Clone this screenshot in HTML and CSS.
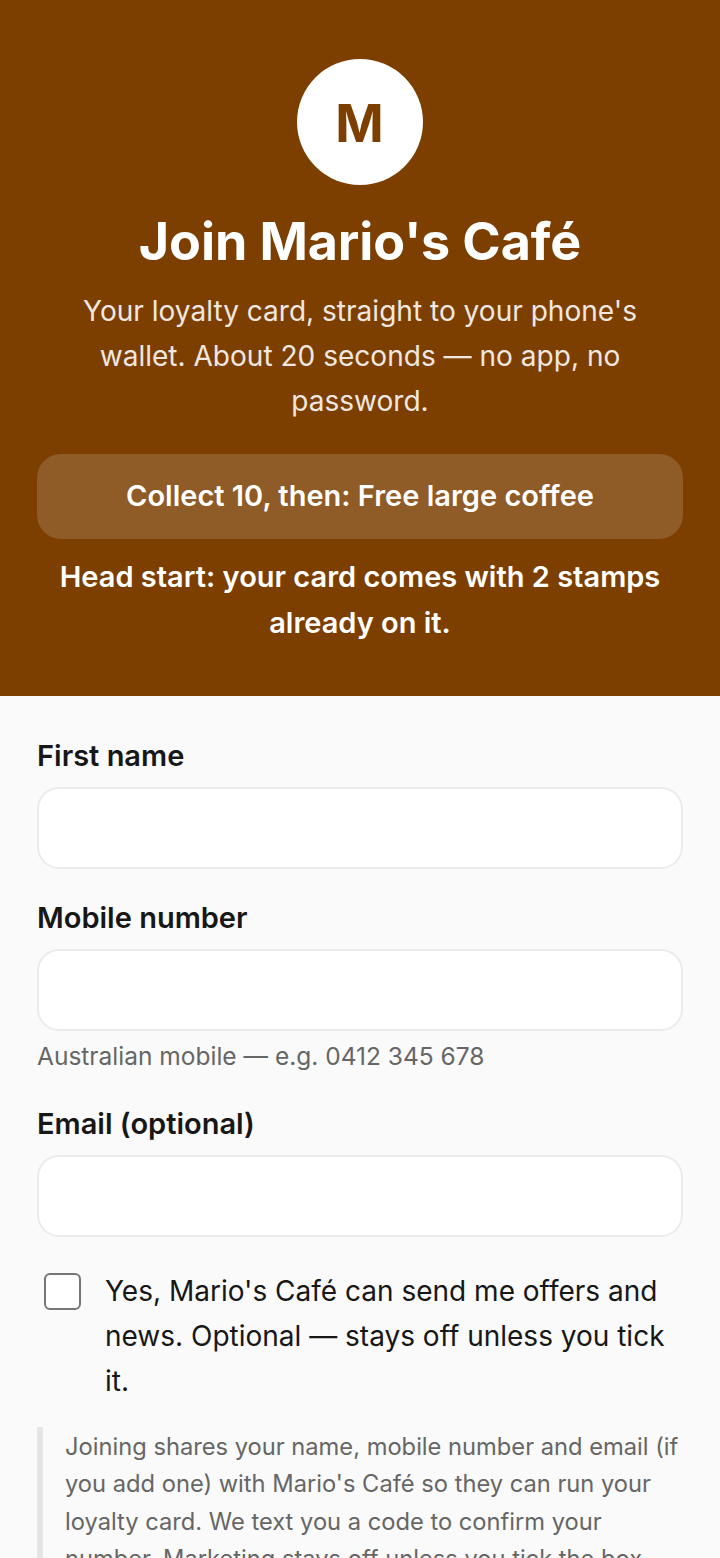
FILE: index.html
```html
<!DOCTYPE html>
<html lang="en">

<head>
  <meta charset="UTF-8" />
  <meta name="viewport" content="width=device-width, initial-scale=1.0" />
  <title>Join Mario's Café</title>
  <link rel="stylesheet" href="styles.css">
</head>

<body>
  <header class="hero">
    <div class="logo">M</div>
    <h1>Join Mario's Café</h1>
    <p class="intro">Your loyalty card, straight to your phone's wallet. About 20 seconds — no app, no password.</p>
    <div class="reward">Collect 10, then: Free large coffee</div>
    <p class="head-start">Head start: your card comes with 2 stamps already on it.</p>
  </header>

  <form class="join-form">
    <div class="field">
      <label for="firstName">First name</label>
      <input id="firstName" type="text">
    </div>
    <div class="field">
      <label for="mobile">Mobile number</label>
      <input id="mobile" type="tel">
      <p class="hint">Australian mobile — e.g. 0412 345 678</p>
    </div>
    <div class="field">
      <label for="email">Email (optional)</label>
      <input id="email" type="email">
    </div>
    <label class="consent">
      <input type="checkbox">
      <span>Yes, Mario's Café can send me offers and news. Optional — stays off unless you tick it.</span>
    </label>
    <p class="notice">Joining shares your name, mobile number and email (if you add one) with Mario's Café so they can run your loyalty card. We text you a code to confirm your number. Marketing stays off unless you tick the box.</p>
  </form>
</body>

</html>
```

FILE: styles.css
```css
* {
  margin: 0;
  padding: 0;
  box-sizing: border-box;
}

html,
body {
  height: 1558px;
  overflow: hidden;
}

body {
  font-family: "Inter", sans-serif;
  background-color: #fafafa;
  color: #171717;
}

.hero {
  background-color: #7c3f00;
  color: #fff;
  text-align: center;
  height: 696px;
  padding: 59px 37px 0;
}

.logo {
  width: 126px;
  height: 126px;
  margin: 0 auto 27px;
  border-radius: 50%;
  background-color: #fff;
  color: #7c3f00;
  font-size: 52px;
  font-weight: 700;
  line-height: 130px;
  text-indent: -1px;
}

h1 {
  font-size: 52px;
  font-weight: 700;
  line-height: 60px;
  letter-spacing: -0.1px;
  margin-bottom: 17px;
}

.intro {
  font-size: 28.05px;
  line-height: 45px;
  color: #fff;
  opacity: 0.88;
  margin-bottom: 30px;
}

.reward {
  height: 85px;
  border-radius: 24px;
  background-color: rgba(255, 255, 255, 0.15);
  font-size: 29px;
  font-weight: 600;
  line-height: 84px;
  margin-bottom: 15px;
}

.head-start {
  font-size: 29px;
  font-weight: 600;
  line-height: 46px;
}

.join-form {
  padding: 37px 37px 0 37px;
}

.field {
  margin-bottom: 25.5px;
}

.field label {
  display: block;
  font-size: 29px;
  font-weight: 600;
  line-height: 46px;
  margin-bottom: 8px;
}

.field input {
  display: block;
  width: 100%;
  height: 82px;
  background-color: #fff;
  border: 2px solid #ebebeb;
  border-radius: 22px;
}

.hint {
  font-size: 24.5px;
  line-height: 38px;
  color: #666;
  margin-top: 6px;
  padding-bottom: 1px;
}

.consent {
  display: flex;
  gap: 24px;
  font-size: 28px;
  line-height: 45px;
  padding-left: 7px;
  padding-top: 6px;
  margin-bottom: 23px;
}

.consent input {
  appearance: none;
  flex: none;
  width: 37px;
  height: 37px;
  margin-top: 4px;
  background-color: #fff;
  border: 2px solid #767676;
  border-radius: 6px;
}

.notice {
  border-left: 6px solid #e5e5e5;
  padding-left: 22px;
  padding-top: 1px;
  font-size: 23.7px;
  line-height: 37.5px;
  color: #666;
}
```
